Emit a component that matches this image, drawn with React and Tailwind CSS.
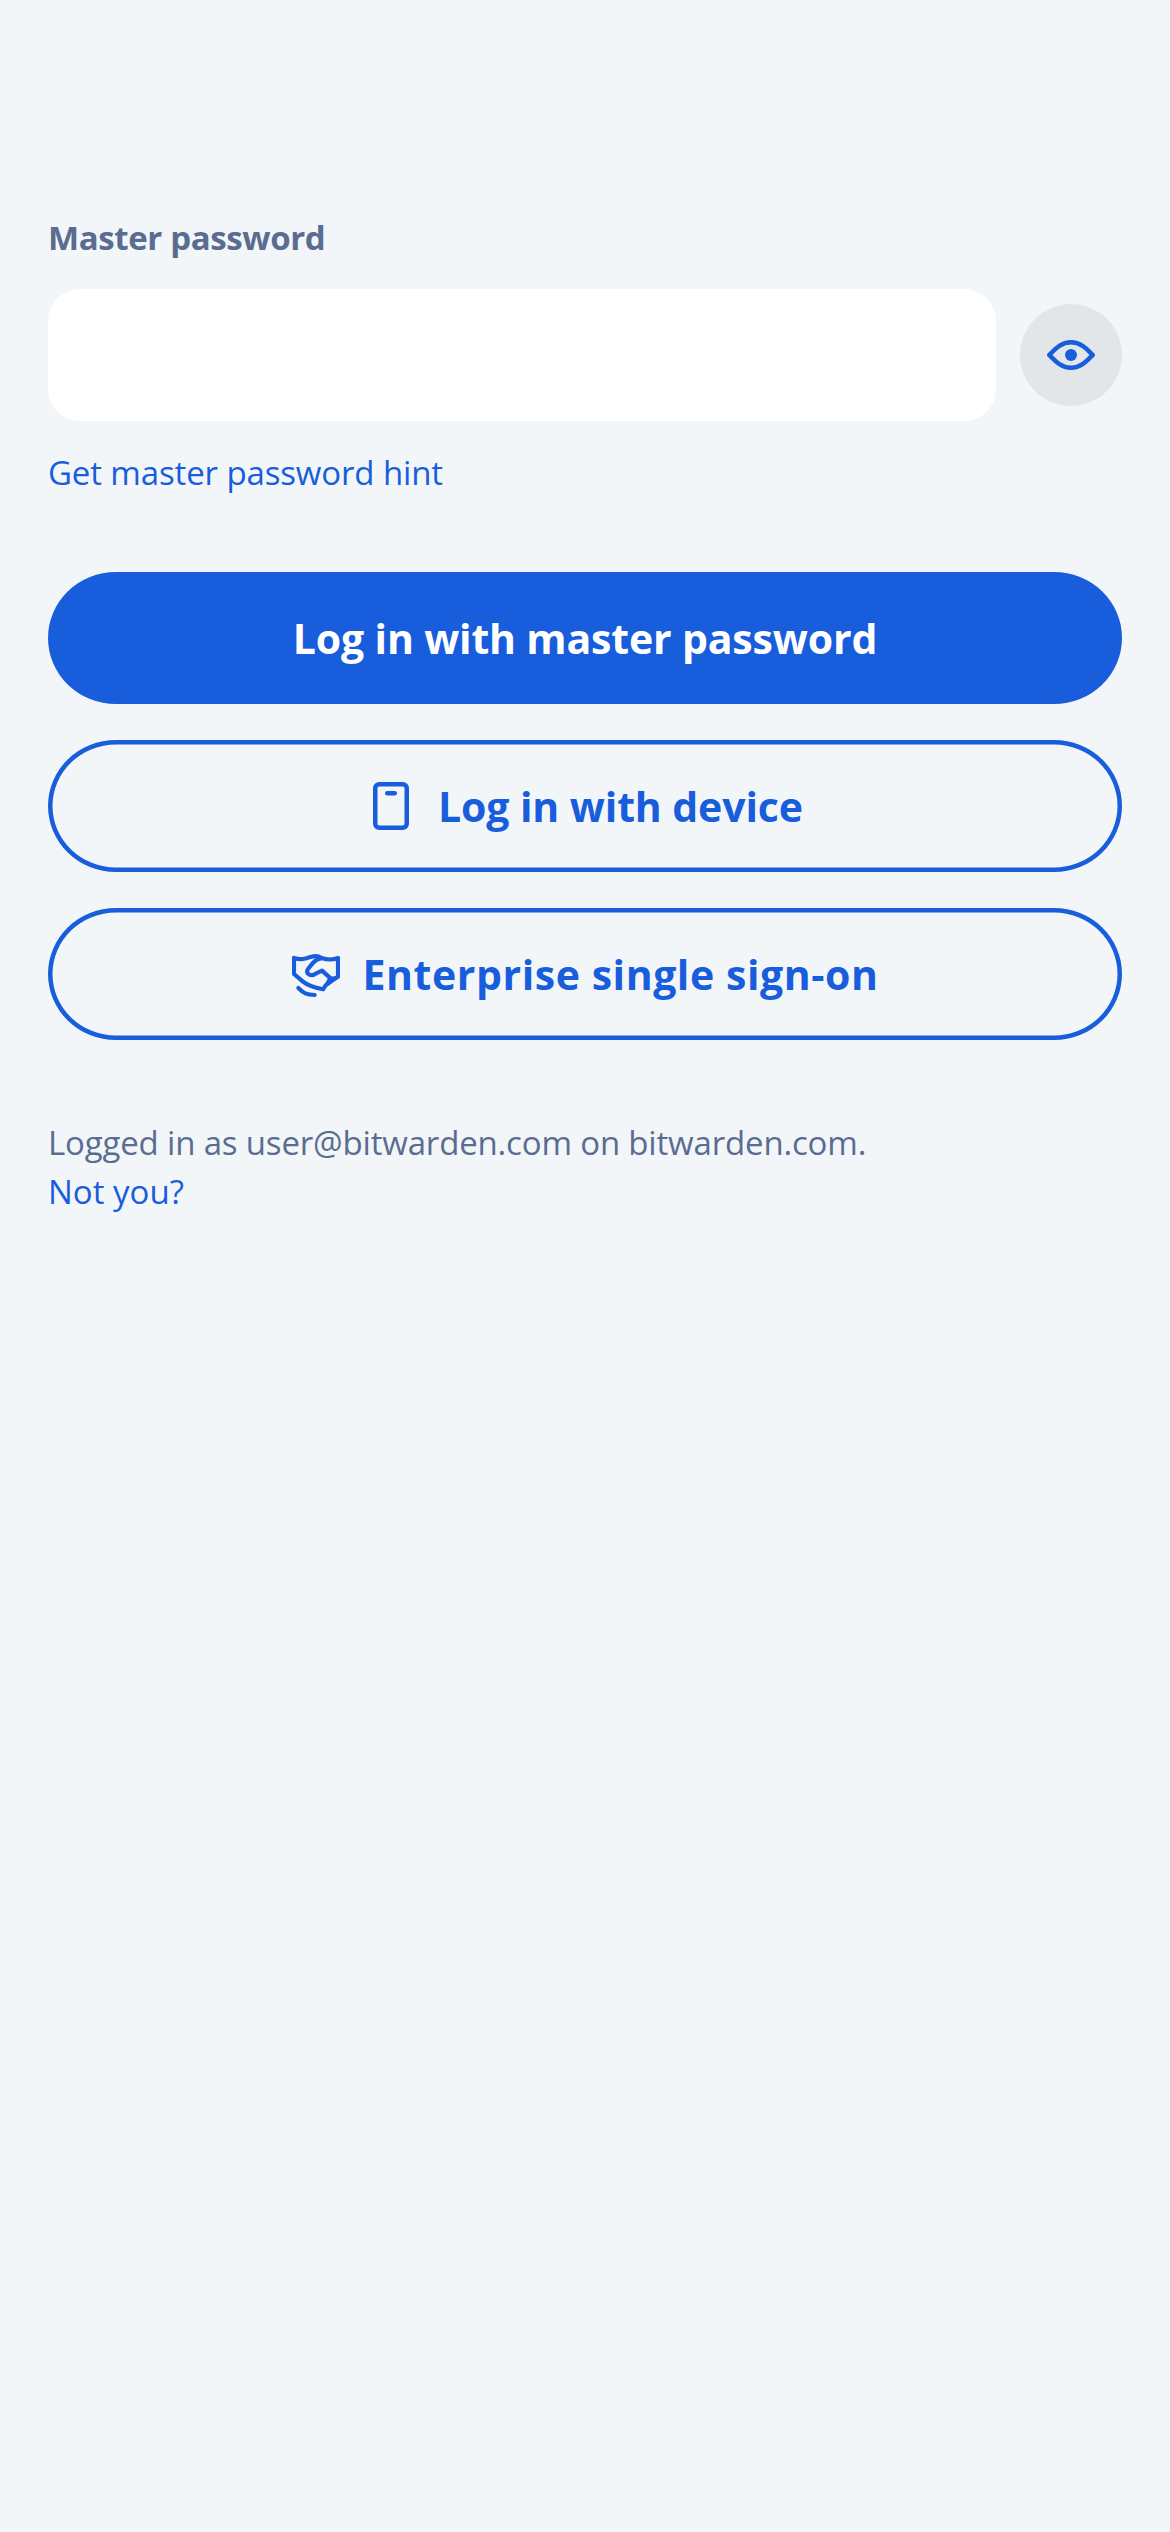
function EyeIcon() {
  return (
    <svg className="h-[30px] w-12" viewBox="0 0 48 30" fill="none">
      <path d="M2.3 15C9 8.2 14.5 2.3 24 2.3S39 8.2 45.7 15C39 21.8 33.5 27.7 24 27.7S9 21.8 2.3 15Z" stroke="currentColor" strokeWidth="4.5" strokeLinejoin="round" />
      <circle cx="24" cy="15" r="6" fill="currentColor" />
    </svg>
  );
}

function DeviceIcon() {
  return (
    <svg className="size-12" viewBox="-6 0 48 48" fill="none" stroke="currentColor" strokeWidth="4.5">
      <rect x="2.25" y="2.25" width="31.5" height="43.5" rx="4" />
      <path d="M14.25 11.25H21.75" strokeLinecap="round" />
    </svg>
  );
}

function HandshakeIcon() {
  return (
    <svg className="size-12" viewBox="33 30 144 144" fill="none" stroke="currentColor" strokeWidth="12.5" strokeLinecap="round" strokeLinejoin="round">
      <path d="M171 110V54C155 60 138 60 122 54C112 48 102 47 92 50C74 56 60 61 39 54V102L66 125C80 137 102 143 126 148L134 136L150 124Z" />
      <path d="M120 55C108 56 100 64 94 71L81 87C76 93 78 101 85 104C91 107 98 105 104 101L123 92L153 119" />
      <path d="M145 115L160 112L152 126L131 139Z" fill="currentColor" strokeWidth="7" />
      <path d="M52 144C68 160 76 164 101 165" />
    </svg>
  );
}

function OutlineButton({ icon, children }) {
  return (
    <button className="flex h-[132px] w-full items-center justify-center gap-[23px] rounded-[68px/66px] text-[41px] font-bold text-[#175ddc] shadow-[inset_0_0_0_4.5px_#175ddc]">
      {icon}
      {children}
    </button>
  );
}

export default function App() {
  return (
    <main className="min-h-[2532px] w-full bg-[#f3f6f9] px-12 pt-[213px] font-['Open_Sans',sans-serif] text-[33px] leading-[49px] text-[#5a6d91]">
      <label htmlFor="password" className="block h-[49px] font-bold tracking-[-0.38px]">
        <span className="whitespace-nowrap">Master password</span>
      </label>
      <div className="mt-[27px] flex items-center gap-6">
        <input id="password" type="password" className="h-[132px] min-w-0 flex-1 rounded-[32px] bg-white px-8 outline-none" />
        <button aria-label="Show password" className="flex size-[102px] items-center justify-center rounded-full bg-[#e2e6e9] text-[#175ddc]">
          <EyeIcon />
        </button>
      </div>
      <a className="mt-[27px] block h-[49px] whitespace-nowrap tracking-[-0.13px] text-[#175ddc]">
        <span>Get master password hint</span>
      </a>
      <div className="mt-[75px] flex flex-col gap-9">
        <button className="flex h-[132px] w-full items-center justify-center rounded-[68px/66px] bg-[#175ddc] text-[41px] font-bold text-white">
          <span className="tracking-[-0.16px]">Log in with master password</span>
        </button>
        <OutlineButton icon={<DeviceIcon />}>
          <span className="tracking-[-0.1px]">Log in with device</span>
        </OutlineButton>
        <OutlineButton icon={<HandshakeIcon />}>
          <span className="tracking-[0.56px]">Enterprise single sign-on</span>
        </OutlineButton>
      </div>
      <footer className="mt-[78px] whitespace-nowrap">
        <p className="tracking-[-0.17px]">Logged in as user@bitwarden.com on bitwarden.com.</p>
        <a className="block text-[#175ddc]">Not you?</a>
      </footer>
    </main>
  );
}
